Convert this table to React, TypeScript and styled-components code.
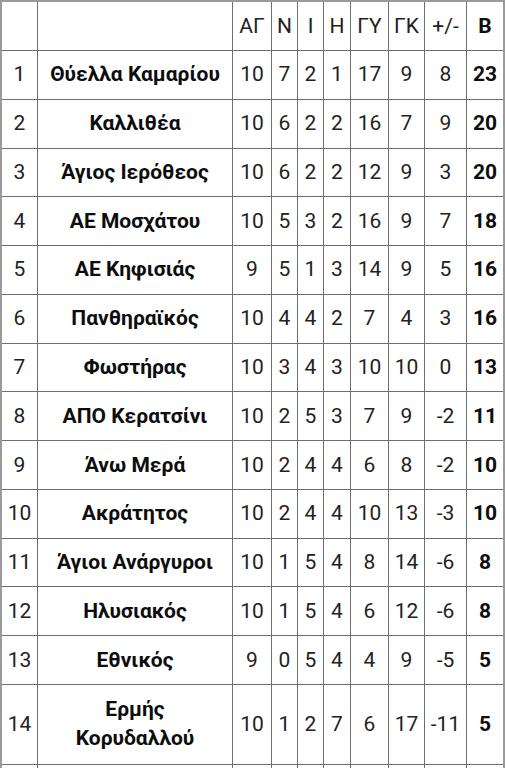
import React from 'react'
import styled, { createGlobalStyle } from 'styled-components'

const GlobalStyle = createGlobalStyle`
  html, body {
    margin: 0;
    padding: 0;
    background: #fff;
  }
  body {
    font-family: Roboto, "Noto Sans", "Liberation Sans", sans-serif;
  }
`

type Team = {
  name: string[]
  played: number
  won: number
  drawn: number
  lost: number
  goalsFor: number
  goalsAgainst: number
  diff: number
  points: number
}

const teams: Team[] = [
  { name: ['Θύελλα Καμαρίου'], played: 10, won: 7, drawn: 2, lost: 1, goalsFor: 17, goalsAgainst: 9, diff: 8, points: 23 },
  { name: ['Καλλιθέα'], played: 10, won: 6, drawn: 2, lost: 2, goalsFor: 16, goalsAgainst: 7, diff: 9, points: 20 },
  { name: ['Άγιος Ιερόθεος'], played: 10, won: 6, drawn: 2, lost: 2, goalsFor: 12, goalsAgainst: 9, diff: 3, points: 20 },
  { name: ['ΑΕ Μοσχάτου'], played: 10, won: 5, drawn: 3, lost: 2, goalsFor: 16, goalsAgainst: 9, diff: 7, points: 18 },
  { name: ['ΑΕ Κηφισιάς'], played: 9, won: 5, drawn: 1, lost: 3, goalsFor: 14, goalsAgainst: 9, diff: 5, points: 16 },
  { name: ['Πανθηραϊκός'], played: 10, won: 4, drawn: 4, lost: 2, goalsFor: 7, goalsAgainst: 4, diff: 3, points: 16 },
  { name: ['Φωστήρας'], played: 10, won: 3, drawn: 4, lost: 3, goalsFor: 10, goalsAgainst: 10, diff: 0, points: 13 },
  { name: ['ΑΠΟ Κερατσίνι'], played: 10, won: 2, drawn: 5, lost: 3, goalsFor: 7, goalsAgainst: 9, diff: -2, points: 11 },
  { name: ['Άνω Μερά'], played: 10, won: 2, drawn: 4, lost: 4, goalsFor: 6, goalsAgainst: 8, diff: -2, points: 10 },
  { name: ['Ακράτητος'], played: 10, won: 2, drawn: 4, lost: 4, goalsFor: 10, goalsAgainst: 13, diff: -3, points: 10 },
  { name: ['Άγιοι Ανάργυροι'], played: 10, won: 1, drawn: 5, lost: 4, goalsFor: 8, goalsAgainst: 14, diff: -6, points: 8 },
  { name: ['Ηλυσιακός'], played: 10, won: 1, drawn: 5, lost: 4, goalsFor: 6, goalsAgainst: 12, diff: -6, points: 8 },
  { name: ['Εθνικός'], played: 9, won: 0, drawn: 5, lost: 4, goalsFor: 4, goalsAgainst: 9, diff: -5, points: 5 },
  { name: ['Ερμής', 'Κορυδαλλού'], played: 10, won: 1, drawn: 2, lost: 7, goalsFor: 6, goalsAgainst: 17, diff: -11, points: 5 },
]

const columnWidths = [36, 195, 39, 26, 26, 27, 38, 36, 42, 36]
const headers = ['ΑΓ', 'Ν', 'Ι', 'Η', 'ΓΥ', 'ΓΚ', '+/-']

const StyledTable = styled.table`
  width: 505px;
  table-layout: fixed;
  border-collapse: separate;
  border-spacing: 0;
  border: 2px solid #9a9a9a;
  font-size: 21px;
  color: #222;
`

const Row = styled.tr<{ $height: number }>`
  height: ${(p) => p.$height}px;

  &:last-child td {
    border-bottom: none;
  }
`

const Cell = styled.td<{ $bold?: boolean }>`
  box-sizing: border-box;
  padding: 0;
  text-align: center;
  vertical-align: middle;
  line-height: 29px;
  white-space: nowrap;
  border-right: 1px solid #6e6e6e;
  border-bottom: 1px solid #6e6e6e;
  font-weight: ${(p) => (p.$bold ? 700 : 400)};
  color: ${(p) => (p.$bold ? '#0d0d0d' : '#222')};

  &:last-child {
    border-right: none;
  }
`

const App = () => {
  return (<>
    <GlobalStyle />
    <StyledTable>
      <colgroup>
        {columnWidths.map((w, i) => <col key={i} style={{ width: w }} />)}
      </colgroup>
      <tbody>
        <Row $height={49}>
          <Cell />
          <Cell />
          {headers.map((h) => <Cell key={h}>{h}</Cell>)}
          <Cell $bold>Β</Cell>
        </Row>
        {teams.map((team, i) => (
          <Row key={i} $height={team.name.length > 1 ? 80 : 48.77}>
            <Cell>{i + 1}</Cell>
            <Cell $bold>
              {team.name.map((line, j) => <div key={j}>{line}</div>)}
            </Cell>
            <Cell>{team.played}</Cell>
            <Cell>{team.won}</Cell>
            <Cell>{team.drawn}</Cell>
            <Cell>{team.lost}</Cell>
            <Cell>{team.goalsFor}</Cell>
            <Cell>{team.goalsAgainst}</Cell>
            <Cell>{team.diff}</Cell>
            <Cell $bold>{team.points}</Cell>
          </Row>
        ))}
        <Row $height={48.77}>
          {columnWidths.map((_, i) => <Cell key={i} />)}
        </Row>
      </tbody>
    </StyledTable>
  </>
  )
}

export default App
